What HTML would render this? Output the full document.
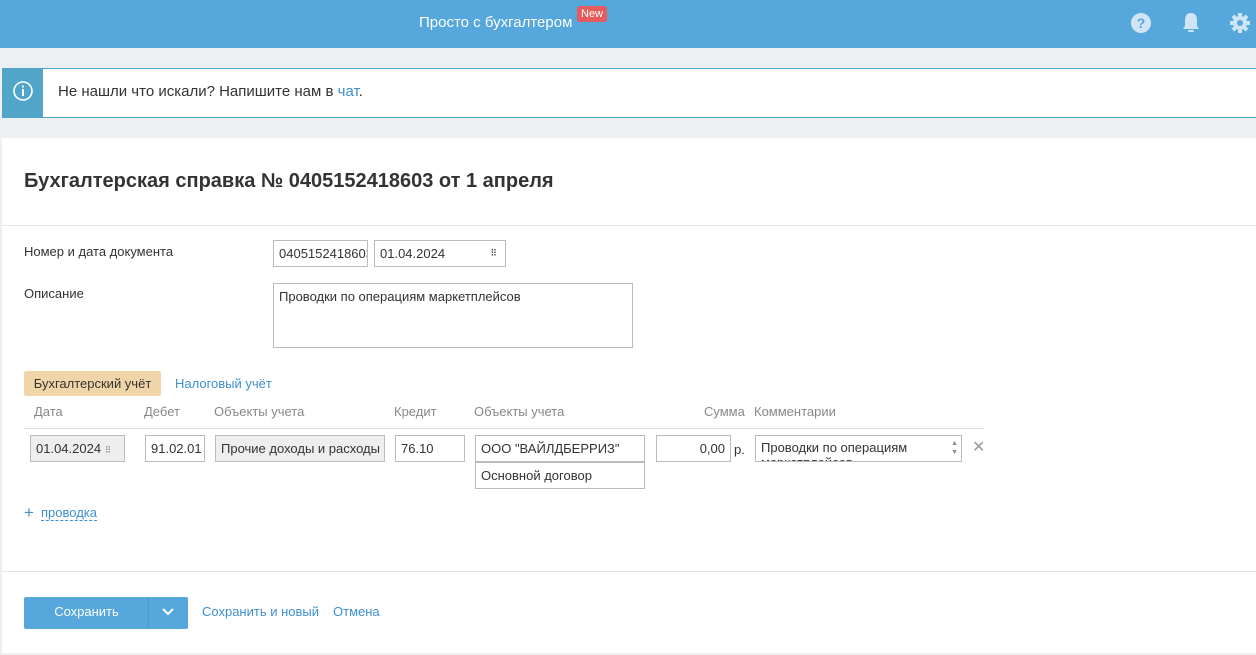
<!DOCTYPE html>
<html><head><meta charset="utf-8"><style>
*{box-sizing:border-box;margin:0;padding:0}
body{width:1256px;height:655px;background:#ecf0f3;font-family:"Liberation Sans",Arial,sans-serif;font-size:13px;color:#333;position:relative;overflow:hidden}
.a{position:absolute}
.hdr{left:0;top:0;width:1256px;height:48px;background:#55a7dc}
.inp{position:absolute;border:1px solid #bbb;background:#fff;height:27px;padding:0 5px;line-height:25px;font-size:13px;color:#333;white-space:nowrap;overflow:hidden}
.gr{background:#eee}
.lbl{position:absolute;color:#888;font-size:13px}
.link{color:#3d8fd0}
</style></head><body>
<div class="a hdr"></div>
<div class="a" style="left:419px;top:14px;color:#fff;font-size:15px">Просто с бухгалтером</div>
<div class="a" style="left:577px;top:6px;background:#e65c5c;color:#fff;font-size:11px;padding:1px 4px;border-radius:3px;line-height:14px">New</div>
<svg class="a" style="left:1130px;top:12px" width="22" height="22" viewBox="0 0 22 22"><circle cx="11" cy="11" r="10" fill="#cfe5f6"/><text x="11" y="16" text-anchor="middle" font-family="Liberation Sans" font-weight="bold" font-size="14" fill="#55a7dc">?</text></svg>
<svg class="a" style="left:1181px;top:11px" width="20" height="24" viewBox="0 0 20 24"><path d="M10 2c-4 0-6 3-6 7v6l-2 3h16l-2-3V9c0-4-2-7-6-7z" fill="#cfe5f6"/><rect x="7" y="19" width="6" height="2" rx="1" fill="#cfe5f6"/></svg>
<svg class="a" style="left:1229px;top:12px" width="22" height="22" viewBox="0 0 22 22"><g fill="#cfe5f6"><circle cx="11" cy="11" r="7"/><rect x="9" y="1" width="4" height="20"/><rect x="1" y="9" width="20" height="4"/><rect x="9" y="1" width="4" height="20" transform="rotate(45 11 11)"/><rect x="9" y="1" width="4" height="20" transform="rotate(-45 11 11)"/></g><circle cx="11" cy="11" r="3" fill="#55a7dc"/></svg>

<div class="a" style="left:2px;top:68px;width:1254px;height:50px;background:#fff;border-top:1px solid #50a5c8;border-bottom:1px solid #50a5c8"></div>
<div class="a" style="left:2px;top:68px;width:41px;height:50px;background:#50a5c8"></div>
<svg class="a" style="left:12px;top:80px" width="22" height="22" viewBox="0 0 22 22"><circle cx="11" cy="11" r="9" fill="none" stroke="#fff" stroke-width="1.6"/><rect x="10" y="9" width="2" height="7" fill="#fff"/><rect x="10" y="5.5" width="2" height="2" fill="#fff"/></svg>
<div class="a" style="left:58px;top:83px;font-size:15px;color:#333">Не нашли что искали? Напишите нам в <span class="link">чат</span>.</div>

<div class="a" style="left:2px;top:138px;width:1254px;height:515px;background:#fff"></div>
<div class="a" style="left:24px;top:170px;font-size:20px;font-weight:bold;color:#333">Бухгалтерская справка № 0405152418603 от 1 апреля</div>
<div class="a" style="left:2px;top:225px;width:1254px;height:1px;background:#e3e3e3"></div>

<div class="a" style="left:24px;top:244px">Номер и дата документа</div>
<div class="inp" style="left:273px;top:240px;width:95px">0405152418603</div>
<div class="inp" style="left:374px;top:240px;width:132px">01.04.2024<span style="position:absolute;right:9px;top:0;font-size:9px;letter-spacing:-1px">⠿</span></div>
<div class="a" style="left:24px;top:286px">Описание</div>
<div class="inp" style="left:273px;top:283px;width:360px;height:65px;line-height:normal;padding-top:5px">Проводки по операциям маркетплейсов</div>

<div class="a" style="left:24px;top:371px;width:137px;height:25px;background:#f0d5a8;border-radius:2px;line-height:25px;text-align:center">Бухгалтерский учёт</div>
<div class="a link" style="left:175px;top:376px">Налоговый учёт</div>
<div class="lbl" style="left:34px;top:404px">Дата</div>
<div class="lbl" style="left:144px;top:404px">Дебет</div>
<div class="lbl" style="left:214px;top:404px">Объекты учета</div>
<div class="lbl" style="left:394px;top:404px">Кредит</div>
<div class="lbl" style="left:474px;top:404px">Объекты учета</div>
<div class="lbl" style="left:704px;top:404px">Сумма</div>
<div class="lbl" style="left:754px;top:404px">Комментарии</div>
<div class="a" style="left:24px;top:428px;width:960px;height:1px;background:#ddd"></div>

<div class="inp gr" style="left:30px;top:435px;width:95px">01.04.2024 <span style="font-size:9px;color:#888">⠿</span></div>
<div class="inp" style="left:145px;top:435px;width:60px">91.02.01</div>
<div class="inp gr" style="left:215px;top:435px;width:170px">Прочие доходы и расходы</div>
<div class="inp" style="left:395px;top:435px;width:70px">76.10</div>
<div class="inp" style="left:475px;top:435px;width:170px">ООО "ВАЙЛДБЕРРИЗ"</div>
<div class="inp" style="left:475px;top:462px;width:170px">Основной договор</div>
<div class="inp" style="left:656px;top:435px;width:75px;text-align:right">0,00</div>
<div class="a" style="left:734px;top:442px">р.</div>
<div class="inp" style="left:755px;top:435px;width:207px;line-height:15px;padding-top:4px;white-space:normal">Проводки по операциям маркетплейсов<span style="position:absolute;right:3px;top:3px;font-size:7px;color:#888;line-height:9px">▲<br>▼</span></div>
<div class="a" style="left:972px;top:437px;color:#999;font-size:16px">✕</div>

<div class="a link" style="left:24px;top:504px;font-size:17px;line-height:17px">+</div>
<div class="a link" style="left:41px;top:506px;border-bottom:1px dashed #3d8fd0;line-height:14px">проводка</div>

<div class="a" style="left:2px;top:571px;width:1254px;height:1px;background:#e3e3e3"></div>
<div class="a" style="left:24px;top:597px;width:164px;height:32px;background:#55a7dc;border-radius:2px"></div>
<div class="a" style="left:24px;top:604px;width:125px;text-align:center;color:#fff">Сохранить</div>
<div class="a" style="left:148px;top:597px;width:1px;height:32px;background:#4c9bd0"></div>
<svg class="a" style="left:162px;top:607px" width="12" height="10" viewBox="0 0 12 10"><path d="M1 2l5 5 5-5" stroke="#fff" stroke-width="2" fill="none"/></svg>
<div class="a link" style="left:202px;top:604px">Сохранить и новый</div>
<div class="a link" style="left:333px;top:604px">Отмена</div>
</body></html>
